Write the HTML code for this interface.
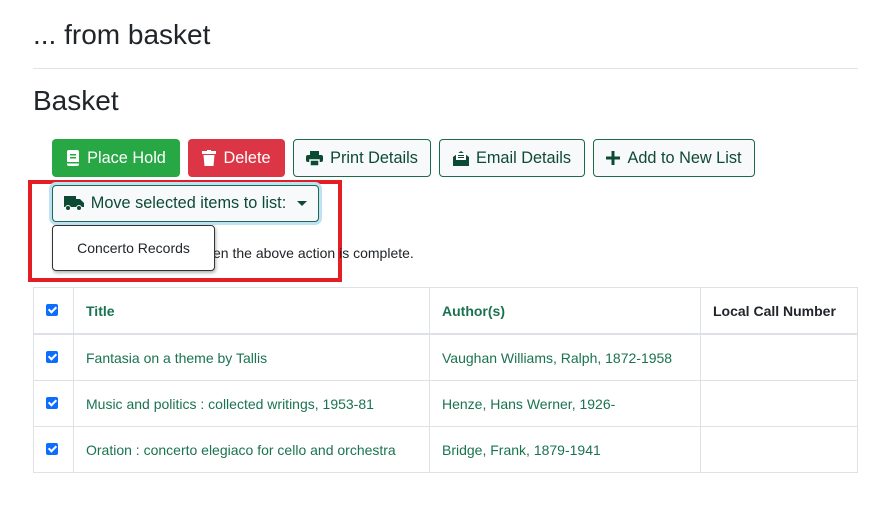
<!DOCTYPE html>
<html><head><style>
body{margin:0;background:#fff;font-family:"Liberation Sans",sans-serif;color:#212529;width:893px;height:509px;overflow:hidden;position:relative}
.a{position:absolute}
h1{position:absolute;margin:0;font-weight:400;font-size:28px;left:33px}
.btn{position:absolute;top:139px;height:38px;box-sizing:border-box;border-radius:4px;font-size:16.3px;display:flex;align-items:center;justify-content:center;gap:7px}
.o{border:1px solid #1b6b4a;color:#0d4a33;background:#f8f9fa}
table{position:absolute;left:33px;top:287px;width:825px;border-collapse:collapse;font-size:14px}
td,th{border:1px solid #dee2e6;padding:0 12px;text-align:left;height:45px}
th{font-weight:700;color:#1a7350;border-bottom:2px solid #dee2e6}
td{color:#1a7350}
.cb{width:12px;height:12px;background:#0d6efd;border-radius:2px;display:inline-block;position:relative}
.cb:after{content:"";position:absolute;left:3.5px;top:1px;width:3px;height:6px;border:solid #fff;border-width:0 2px 2px 0;transform:rotate(45deg)}
</style></head><body>
<h1 style="top:19px">... from basket</h1>
<div class="a" style="left:33px;top:68px;width:825px;height:1px;background:#e3e3e3"></div>
<h1 style="top:85px">Basket</h1>
<div class="btn" style="left:52px;width:128px;background:#28a745;color:#fff"><svg width="14" height="16"><rect x="1" y="0" width="12" height="16" rx="2" fill="#fff"/><rect x="4" y="4" width="6" height="1.5" fill="#28a745"/><rect x="4" y="7" width="6" height="1.5" fill="#28a745"/><rect x="1" y="12" width="12" height="1.5" fill="#28a745"/></svg>Place Hold</div>
<div class="btn" style="left:188px;width:97px;background:#dc3545;color:#fff"><svg width="14" height="16"><rect x="0" y="1" width="14" height="3" fill="#fff"/><rect x="5" y="0" width="4" height="2" fill="#fff"/><path d="M1.5 5h11l-1 11h-9z" fill="#fff"/></svg>Delete</div>
<div class="btn o" style="left:293px;width:138px"><svg width="17" height="15"><rect x="4" y="0" width="9" height="4" fill="#0d4a33"/><rect x="0" y="4" width="17" height="7" rx="2" fill="#0d4a33"/><rect x="4" y="9" width="9" height="6" fill="#0d4a33" stroke="#f8f9fa" stroke-width="1.5"/></svg>Print Details</div>
<div class="btn o" style="left:439px;width:146px"><svg width="16" height="16"><path d="M0 7l8-6 8 6v9H0z" fill="#0d4a33"/><rect x="3" y="3" width="10" height="7" fill="#fff"/><rect x="5" y="5" width="6" height="1" fill="#0d4a33"/><rect x="5" y="7" width="6" height="1" fill="#0d4a33"/></svg>Email Details</div>
<div class="btn o" style="left:593px;width:162px"><svg width="14" height="14"><rect x="5.5" y="0" width="3" height="14" fill="#0d4a33"/><rect x="0" y="5.5" width="14" height="3" fill="#0d4a33"/></svg>Add to New List</div>
<div class="a" style="left:28px;top:180px;width:306px;height:94px;border:4px solid #e31e24"></div>
<div class="btn o" style="top:185px;left:52px;width:267px;height:37px;box-shadow:0 0 0 3px #bfe0f5"><svg width="20" height="15"><rect x="0" y="0" width="12" height="11" fill="#0d4a33"/><path d="M12 3h4l4 4v4h-8z" fill="#0d4a33"/><circle cx="4" cy="12" r="2.5" fill="#0d4a33" stroke="#f8f9fa"/><circle cx="15" cy="12" r="2.5" fill="#0d4a33" stroke="#f8f9fa"/></svg>Move selected items to list:<span style="margin-left:4px;border-top:5px solid #0d4a33;border-left:5px solid transparent;border-right:5px solid transparent;width:0;height:0"></span></div>
<div class="a" style="left:213px;top:245px;font-size:14px">en the above action is complete.</div>
<div class="a" style="left:52px;top:225px;width:163px;height:46px;box-sizing:border-box;border:1px solid #333;border-radius:4px;background:#fff;font-size:14px;display:flex;align-items:center;justify-content:center;box-shadow:1px 2px 3px rgba(0,0,0,.3)">Concerto Records</div>
<table>
<tr><th style="width:15px"><span class="cb"></span></th><th style="width:331px">Title</th><th style="width:246px">Author(s)</th><th style="color:#212529">Local Call Number</th></tr>
<tr><td><span class="cb"></span></td><td>Fantasia on a theme by Tallis</td><td>Vaughan Williams, Ralph, 1872-1958</td><td></td></tr>
<tr><td><span class="cb"></span></td><td>Music and politics : collected writings, 1953-81</td><td>Henze, Hans Werner, 1926-</td><td></td></tr>
<tr><td><span class="cb"></span></td><td>Oration : concerto elegiaco for cello and orchestra</td><td>Bridge, Frank, 1879-1941</td><td></td></tr>
</table>
</body></html>
